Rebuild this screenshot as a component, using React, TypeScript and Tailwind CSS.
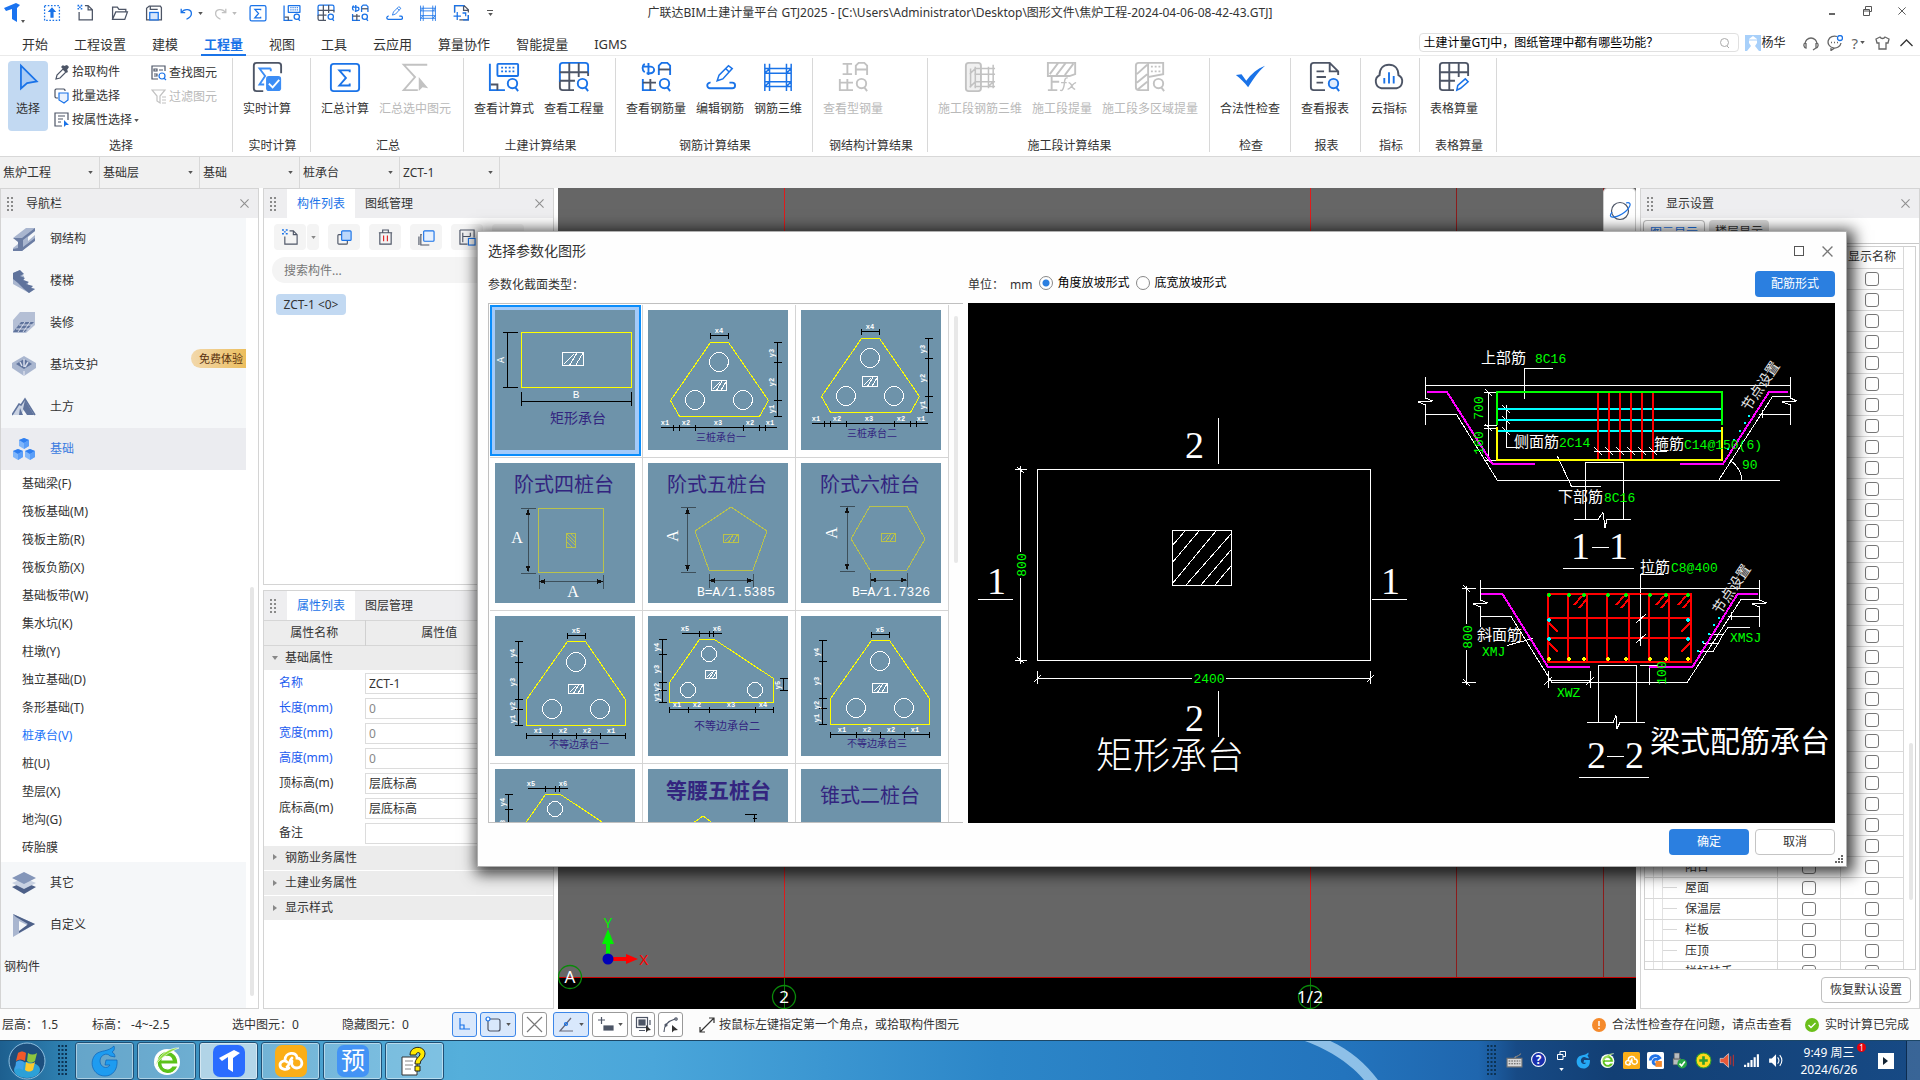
import React from "react";

type Kids = { children?: React.ReactNode };
const BLUE = "#1a73e8";
const DARK = "#4d5566";
const GRAY = "#c2c2c2";

/* ---------- generic pieces ---------- */

const Grip = () => (
  <svg width="8" height="16" viewBox="0 0 8 16" className="shrink-0" fill="#8a8a8a">
    {[0, 4, 8, 12].map((y) => (
      <g key={y}>
        <rect x="0" y={y + 1} width="2" height="2" />
        <rect x="4" y={y + 1} width="2" height="2" />
      </g>
    ))}
  </svg>
);

const Caret = ({ color = "#555" }: { color?: string }) => (
  <svg width="5" height="3" viewBox="0 0 6 4" className="shrink-0">
    <path d="M0 0h6L3 4z" fill={color} />
  </svg>
);

const Cross = ({ size = 9, color = "#8f8f8f" }: { size?: number; color?: string }) => (
  <svg width={size} height={size} viewBox="0 0 10 10" className="shrink-0">
    <path d="M.5.5l9 9M9.5.5l-9 9" stroke={color} strokeWidth="1.2" />
  </svg>
);

const Close = () => (
  <button aria-label="关闭" className="flex size-5 items-center justify-center">
    <Cross />
  </button>
);

/* ---------- toolbar icons, all on a 32 x 32 grid ---------- */

const Lens = ({ c = BLUE }: { c?: string }) => (
  <g stroke={c} fill="none">
    <circle cx="25" cy="23" r="5" />
    <path d="M28 27l3 4" />
  </g>
);

const icons: Record<string, (c: string, d: string) => React.ReactNode> = {
  cursor: (c) => <path d="M8 3v26l7-6 11-2z" fill="#a9cbf5" stroke={c} />,
  realtime: (c, d) => (
    <>
      <path d="M12 31H5a3 3 0 0 1-3-3V4a3 3 0 0 1 3-3h23a3 3 0 0 1 3 3v8" stroke={d} />
      <path d="M20 7H8l6 8-6 9h5M20 7v3" stroke="#3c8df5" />
      <rect x="15" y="15" width="16" height="16" rx="3" fill="#3c8df5" stroke="none" />
      <path d="M18 23l4 4 7-8" stroke="#fff" />
    </>
  ),
  sum: (c) => (
    <>
      <rect x="1" y="2" width="30" height="29" rx="3" stroke={c} />
      <path d="M21 11V9H10l7 8-7 8h11v-2" stroke={c} />
    </>
  ),
  sumSel: (c) => (
    <>
      <path d="M29 3H4l12 13L4 30h15" stroke={c} />
      <path d="M20 16v15l4-4 6 1z" fill={c} stroke="none" />
    </>
  ),
  formula: (c, d) => (
    <>
      <rect x="9" y="2" width="22" height="13" rx="1" stroke={c} />
      <path d="M13 6h15M13 10h15" stroke={c} strokeDasharray="2 2" />
      <path d="M1 2v28h16" stroke={c} />
      <path d="M2 24h7v6" stroke={d} />
      <Lens c={c} />
    </>
  ),
  qty: (c, d) => (
    <>
      <path d="M16 30H4a3 3 0 0 1-3-3V20M31 11v4" stroke={d} />
      <path d="M1 21V4a3 3 0 0 1 3-3h24a3 3 0 0 1 3 3v8" stroke={c} />
      <path d="M11 1v29M21 1v15M1 11h30M1 20h16" stroke={d} />
      <Lens c={c} />
    </>
  ),
  rebarQty: (c, d) => (
    <>
      <path d="M8 1v13M2 5h8a4 3.500 0 1 1 0 7H6M4 2a4 5 0 0 0 0 9" stroke={c} />
      <path d="M19 14V4l3-3h6l3 3v10" stroke={c} />
      <path d="M19 8h12" stroke={d} />
      <path d="M2 18v12h14" stroke={c} />
      <path d="M2 22h14M10 18v12" stroke={d} />
      <Lens c={c} />
    </>
  ),
  rebarEdit: (c) => (
    <>
      <path d="M13 20l2-6L25 4l4 3-10 11-6 2zM22 7l4 4" stroke={c} strokeWidth="1.6" />
      <path d="M6 22a3 3 0 0 0-1 6h24a3 3 0 0 0 0-6h-3" stroke={c} />
    </>
  ),
  rebar3d: (c) => (
    <path
      d="M2 2v29M7 2v29M25 2v29M30 2v29M2 7h28M2 12h28M2 21h28M2 26h28M2 12l5-5M2 26l5-5M25 12l5-5M25 26l5-5"
      stroke={c}
      strokeWidth="1.6"
    />
  ),
  shapeSteel: (c) => (
    <>
      <path d="M5 2h10M5 13h10M10 2v11" stroke={c} />
      <path d="M19 14V4l3-3h6l3 3v10M19 8h12" stroke={c} />
      <path d="M2 18v12h14M2 22h14M10 18v12" stroke={c} />
      <Lens c={c} />
    </>
  ),
  seg3d: (c) => (
    <>
      <rect x="1" y="1" width="16" height="30" rx="3" stroke={c} fill="#f0f0f0" />
      <path d="M10 7h22M10 13h22M10 21h22M10 26h22M6 7v20M11 5v23M25 5v23M30 3v25M5 13l6-6M5 27l6-6M24 27l6-6" stroke={c} strokeWidth="1.6" />
    </>
  ),
  segQty: (c) => (
    <>
      <path d="M1 13V1h29v12l-6 2H1zM3 13L12 1M10 14L20 1M19 14l9-12" stroke={c} />
      <path d="M5 15v15M1 30h10M5 21h8" stroke={c} />
      <path d="M22 17c-4-1-3 5-4 9s-2 5-4 4M15 22h6M23 22c4 0 3 7 7 7M31 22c-4 0-5 7-9 7" stroke={c} strokeWidth="1.5" />
    </>
  ),
  segArea: (c) => (
    <>
      <path d="M14 30H4a3 3 0 0 1-3-3V4a3 3 0 0 1 3-3h26v12l-16 3zM14 1v29M2 13L13 3M2 22l11-9M2 30l11-9" stroke={c} />
      <path d="M17 5h12M17 10h12" stroke={c} strokeDasharray="2 2" />
      <Lens c={c} />
    </>
  ),
  check: (c) => <path d="M1 14l6-1 5 7C17 13 24 7 32 4c-8 7-13 15-18 23C10 22 6 18 1 14z" fill={c} stroke="none" />,
  report: (c, d) => (
    <>
      <path d="M16 30H4a3 3 0 0 1-3-3V4a3 3 0 0 1 3-3h17l9 9v4M21 1v9h9" stroke={d} />
      <path d="M7 10h8M7 16h10M7 22h7" stroke={d} />
      <circle cx="25" cy="23" r="5" fill="#e1edfd" stroke={c} />
      <path d="M28 27l3 4" stroke={c} />
    </>
  ),
  cloud: (c, d) => (
    <>
      <path d="M8 28a7.500 7.500 0 0 1-2-14C6 7 10 3 16 3s10 4 10 11a7.500 7.500 0 0 1-2 14z" stroke={d} />
      <path d="M11 17v6M16 11v12M21 15v8" stroke={c} />
    </>
  ),
  tableCalc: (c, d) => (
    <>
      <path d="M16 30H4a3 3 0 0 1-3-3V4a3 3 0 0 1 3-3h24a3 3 0 0 1 3 3v11" stroke={d} />
      <path d="M11 1v29M21 1v15M1 11h30M1 20h16" stroke={d} />
      <path d="M19 30l1-5 8-7 3 3-8 7z" stroke={c} strokeWidth="1.6" />
    </>
  ),
  upload: (c) => (
    <>
      <rect x="2" y="2" width="28" height="28" stroke={c} strokeDasharray="3 3" />
      <path d="M16 5l8 9h-5v11h-6V14H8z" fill={c} stroke="none" />
    </>
  ),
  newDoc: (c, d) => (
    <>
      <path d="M3 14v15h25V10l-8-8H14M20 2v8h8" stroke={d} />
      <path d="M0 2h3M6 2h3M3 5h3M0 8h3M6 8h3" stroke={c} strokeWidth="3" />
    </>
  ),
  open: (_c, d) => <path d="M2 28V5h9l3 4h13v5M2 28l6-14h22l-5 14z" stroke={d} />,
  save: (c, d) => (
    <>
      <path d="M2 29V7l5-4h21l2 3v23z" stroke={d} />
      <path d="M9 3v6h14" stroke={d} />
      <rect x="8" y="15" width="16" height="14" fill="#d5e5fb" stroke={c} />
    </>
  ),
  undo: (c) => <path d="M4 5v9h9M4 14C12 3 28 6 27 17c0 6-5 9-11 12" stroke={c} />,
  redo: () => <path d="M28 5v9h-9M28 14C20 3 4 6 5 17c0 6 5 9 11 12" stroke={GRAY} />,
  batchNew: (c, d) => (
    <>
      <path d="M2 15V2h18l8 8v5M19 2v9h9M11 29h17V20" stroke={d} />
      <path d="M2 15V2h18M28 20v9H18M7 14v15M0 22h14M17 16h6v6" stroke={c} />
    </>
  ),
};

const Icon = ({ name, size = 32, off = false, w = 2 }: { name: string; size?: number; off?: boolean; w?: number }) => (
  <svg width={size} height={size} viewBox="-1 0 34 32" fill="none" strokeWidth={w} className="shrink-0">
    {icons[name](off ? GRAY : BLUE, off ? GRAY : DARK)}
  </svg>
);

/* ---------- title bar and menu ---------- */

const quick = ["upload", "newDoc", "open", "save"];
const quick2 = ["sum", "formula", "qty", "rebarQty", "rebarEdit", "rebar3d", "batchNew"];

const TitleBar = () => (
  <header className="relative flex h-[26px] shrink-0 items-center bg-white">
    <svg width="22" height="20" viewBox="0 0 22 20" className="ml-1">
      <path d="M0 5L12 0l4 2-3 3 0 14-5-3V6L2 8z" fill="#1a73f0" />
      <path d="M17 17h4l-2 3z" fill="#555" />
    </svg>
    <div className="ml-[17px] flex items-center gap-4">
      {quick.map((n) => (
        <button key={n} aria-label={n} className="w-[18px]">
          <Icon name={n} size={18} w={2.4} />
        </button>
      ))}
      <div className="flex items-center gap-2.5">
        <button aria-label="撤销" className="flex items-center gap-1">
          <Icon name="undo" size={15} w={3} />
          <Caret />
        </button>
        <button aria-label="重做" className="flex items-center gap-1">
          <Icon name="redo" size={15} w={3} />
          <Caret color="#bbb" />
        </button>
      </div>
      <div className="-ml-1 flex items-center gap-4">
        {quick2.map((n) => (
          <button key={n} aria-label={n} className="w-[18px]">
            <Icon name={n} size={18} w={2.4} />
          </button>
        ))}
        <button aria-label="自定义快速访问" className="flex flex-col items-center gap-0.5">
          <span className="h-px w-1.5 bg-[#555]" />
          <Caret />
        </button>
      </div>
    </div>
    <h1 className="absolute inset-x-0 top-1 text-center text-[12px] leading-[18px] text-[#333]">
      广联达BIM土建计量平台 GTJ2025 - [C:\Users\Administrator\Desktop\图形文件\焦炉工程-2024-04-06-08-42-43.GTJ]
    </h1>
    <div className="relative ml-auto mr-3.5 flex items-center gap-[26px] pb-1">
      <button aria-label="最小化" className="h-3 w-2">
        <span className="mt-1.5 block h-0.5 w-1.5 bg-[#666]" />
      </button>
      <button aria-label="还原">
        <svg width="9" height="10" viewBox="0 0 9 10" fill="none" stroke="#555">
          <path d="M2.500 3V.5h6v5H6.500M.5 3.500h6v6h-6zM.5 5h6" />
        </svg>
      </button>
      <button aria-label="关闭窗口">
        <Cross size={8} color="#555" />
      </button>
    </div>
  </header>
);

const menus = ["开始", "工程设置", "建模", "工程量", "视图", "工具", "云应用", "算量协作", "智能提量", "IGMS"];

const MenuBar = () => (
  <nav className="flex h-[30px] shrink-0 items-center border-b border-[#eaeaea] bg-white pl-[9px]">
    {menus.map((m) => {
      const on = m === "工程量";
      return (
        <a key={m} href="#" className={`flex h-[30px] flex-col items-center px-[10px] pt-[9px] text-[13px] leading-[18px] ${on ? "font-bold text-[#1a73e8]" : "text-[#333]"}`}>
          <span className="px-[3px]">{m}</span>
          {on && <span className="mt-px h-0.5 w-full bg-[#1a73e8]" />}
        </a>
      );
    })}
    <div className="ml-auto mr-[7px] flex items-center pt-1">
      <label className="flex h-[19px] w-[320px] items-center rounded-sm border border-[#e0e0e0] bg-white px-[3px]">
        <input aria-label="搜索帮助" className="min-w-0 flex-1 text-[12px] leading-4 text-black outline-none" defaultValue="土建计量GTJ中，图纸管理中都有哪些功能？" />
        <svg width="12" height="12" viewBox="0 0 12 12" fill="none" stroke="#aaa" className="mr-1">
          <circle cx="5.500" cy="5.500" r="4" />
          <path d="M8 9l2 2" />
        </svg>
      </label>
      <svg width="16" height="16" viewBox="0 0 16 16" className="ml-1.5">
        <rect width="16" height="16" fill="#a8d0fa" />
        <path d="M4 4l4-3 4 3v4l-2 3 4 5H2l4-5-2-3z" fill="#fff" />
        <path d="M4 5h8" stroke="#a8d0fa" />
      </svg>
      <span className="text-[12px] leading-4 text-[#222]">杨华</span>
      <div className="ml-[18px] flex items-center gap-2 text-[#666]">
        <button aria-label="客服">
          <svg width="16" height="16" viewBox="0 0 16 16" fill="none" stroke="currentColor" strokeWidth="1.3">
            <path d="M2 9a6 6 0 1 1 12 0M2 8c-2 1-1 5 1 5V8M14 8c2 1 1 5-1 5V8M13 13l-3 2" />
          </svg>
        </button>
        <button aria-label="消息">
          <svg width="16" height="16" viewBox="0 0 16 16" fill="none" stroke="currentColor" strokeWidth="1.3">
            <path d="M10 1.500A6.500 6 0 1 0 14 8M4 13v2.500l3-2" />
            <circle cx="13" cy="3" r="2.500" stroke={BLUE} />
            <path d="M4 7.500h1M7 7.500h1M10 7.500h1" strokeWidth="1.600" />
          </svg>
        </button>
        <button aria-label="帮助" className="flex items-center gap-0.5 text-[15px] leading-4">
          ?<Caret />
        </button>
        <button aria-label="皮肤" className="ml-0.5">
          <svg width="15" height="14" viewBox="0 0 15 14" fill="none" stroke="currentColor" strokeWidth="1.300">
            <path d="M5 1c1 2 4 2 5 0l4 2-1 4h-2v6H4V7H2L1 3z" />
          </svg>
        </button>
        <button aria-label="折叠功能区" className="ml-0.5">
          <svg width="13" height="8" viewBox="0 0 13 8" fill="none" stroke="#333" strokeWidth="1.300">
            <path d="M.5 7l6-6 6 6" />
          </svg>
        </button>
      </div>
    </div>
  </nav>
);

/* ---------- ribbon ---------- */

const groups: { w: string; label: string; items: [string, string, boolean?][] }[] = [
  { w: "w-[78px]", label: "实时计算", items: [["realtime", "实时计算"]] },
  { w: "w-[153px]", label: "汇总", items: [["sum", "汇总计算"], ["sumSel", "汇总选中图元", true]] },
  { w: "w-[152px]", label: "土建计算结果", items: [["formula", "查看计算式"], ["qty", "查看工程量"]] },
  { w: "w-[197px]", label: "钢筋计算结果", items: [["rebarQty", "查看钢筋量"], ["rebarEdit", "编辑钢筋"], ["rebar3d", "钢筋三维"]] },
  { w: "w-[115px]", label: "钢结构计算结果", items: [["shapeSteel", "查看型钢量", true]] },
  { w: "w-[282px]", label: "施工段计算结果", items: [["seg3d", "施工段钢筋三维", true], ["segQty", "施工段提量", true], ["segArea", "施工段多区域提量", true]] },
  { w: "w-[81px]", label: "检查", items: [["check", "合法性检查"]] },
  { w: "w-[70px]", label: "报表", items: [["report", "查看报表"]] },
  { w: "w-[59px]", label: "指标", items: [["cloud", "云指标"]] },
  { w: "w-[77px]", label: "表格算量", items: [["tableCalc", "表格算量"]] },
];

const SmallCmd = ({ label, off, caret, children }: Kids & { label: string; off?: boolean; caret?: boolean }) => (
  <button className={`flex h-[24px] shrink-0 items-center gap-[2px] whitespace-nowrap text-[12px] leading-4 ${off ? "text-[#b9b9b9]" : "text-[#333]"}`}>
    <svg width="16" height="16" viewBox="0 0 16 16" fill="none" strokeWidth="1.200" className="shrink-0">
      {children}
    </svg>
    {label}
    {caret && <Caret />}
  </button>
);

const Ribbon = () => (
  <section className="flex h-[101px] shrink-0 items-start border-b border-[#d8d8d8] bg-white pt-0.5 text-[12px] leading-4 text-[#333]">
    <div className="flex h-[94px] w-[233px] flex-col border-r border-[#d8d8d8] pl-2">
      <div className="flex h-[72px] shrink-0 items-start pt-[3px]">
        <button className="flex h-[70px] w-10 flex-col items-center rounded-sm bg-[#c2d9f2] pt-px">
          <Icon name="cursor" size={30} />
          <span className="mt-[9px]">选择</span>
        </button>
        <div className="ml-[6px] flex h-[70px] flex-col justify-center">
          <SmallCmd label="拾取构件">
            <path d="M2 15l1-4 6-6 3 3-6 6z" stroke={DARK} />
            <path d="M7 3l6 6 1-2-1-1 2-3-2-2-3 1-1-1z" fill={DARK} />
          </SmallCmd>
          <SmallCmd label="批量选择">
            <path d="M4 10H2L1 9V2l1-1h8l1 1v1" stroke={DARK} />
            <path d="M5 5h9v7l-4 3-5-3z" stroke={BLUE} fill="#eaf2fe" />
          </SmallCmd>
          <SmallCmd label="按属性选择" caret>
            <path d="M8 14H1V1h13v7M4 4h7M4 7h5M4 10h3" stroke={DARK} />
            <path d="M10 8v7l2-2h3z" fill={BLUE} />
          </SmallCmd>
        </div>
        <div className="ml-3 flex flex-col">
          <SmallCmd label="查找图元">
            <path d="M7 14H1V1h13v5M3 4h3v2H3zM8 5h4M3 9h3v2H3" stroke={DARK} />
            <path d="M13 13l2 2M11 8a3 3 0 1 1 0 6 3 3 0 1 1 0-6" stroke={BLUE} />
          </SmallCmd>
          <SmallCmd label="过滤图元" off>
            <path d="M1 1h13L9 7v7l-3-2V7zM11 8h4M11 11h4M11 14h4" stroke="#c2c2c2" />
          </SmallCmd>
        </div>
      </div>
      <span className="mt-2 pl-0.5 text-center">选择</span>
    </div>
    {groups.map((g) => (
      <div key={g.label} className={`flex h-[94px] shrink-0 flex-col border-r border-[#d8d8d8] ${g.w}`}>
        <div className="flex h-[72px] shrink-0 gap-2.5 pl-2.5 pt-[3px]">
          {g.items.map(([icon, label, off]) => (
            <button key={label} disabled={!!off} className={`flex h-[69px] flex-col items-center whitespace-nowrap ${off ? "text-[#b9b9b9]" : ""}`}>
              <Icon name={icon} off={!!off} />
              <span className="mt-2">{label}</span>
            </button>
          ))}
        </div>
        <span className="mt-2 whitespace-nowrap pl-0.5 text-center">{g.label}</span>
      </div>
    ))}
  </section>
);

const Combos = () => (
  <div className="flex h-[31px] shrink-0 items-stretch bg-[#f1f1f1]">
    {["焦炉工程", "基础层", "基础", "桩承台", "ZCT-1"].map((v) => (
      <div key={v} className="relative flex w-[100px] items-center border-r border-[#d8d8d8]">
        <select aria-label={v} className="w-full appearance-none pl-[3px] text-[12px] leading-4 text-[#333] outline-none">
          <option>{v}</option>
        </select>
        <span className="pointer-events-none absolute right-1.5">
          <Caret />
        </span>
      </div>
    ))}
  </div>
);

/* ---------- navigation ---------- */

const navArt: Record<string, React.ReactNode> = {
  钢结构: (
    <>
      <path d="M1 11L14 1h9v3l-7 6v4l7-6v4L10 24H1v-3l5-4v-5z" fill="#a9b6cf" />
      <path d="M1 11h9L23 1v3L11 13v7l12-9v3L10 24H1v-2l5-1v-6z" fill="#6b7da3" />
    </>
  ),
  楼梯: (
    <>
      <path d="M1 4l7-3v4l4 2v4l4 2v4l7 3-6 4L1 15z" fill="#a9b6cf" />
      <path d="M8 1l4 4-4 2 5 2-2 2 6 2-3 2 7 2-2 2 4 1-6 4-5-4-6-6-5-4V4z" fill="#5f739c" />
    </>
  ),
  装修: (
    <>
      <path d="M1 9l7-8h15v13l-9 8H1z" fill="#b4bfd5" />
      <path d="M9 11h13l-9 10H1z" fill="#5f739c" />
      <path d="M7 14h13M4 18h13M13 11l-7 10M18 11l-7 10" stroke="#d6dcea" />
    </>
  ),
  基坑支护: (
    <>
      <path d="M0 10L12 3l12 7v5l-12 8-12-8z" fill="#a9b6cf" />
      <path d="M4 11l8-5 8 5-8 5z" fill="#5f739c" />
      <path d="M8 9l2 4M12 6v8M16 9l-3 5M12 18v5" stroke="#d6dcea" strokeWidth="1.500" />
    </>
  ),
  土方: (
    <>
      <path d="M0 20L7 9l2 1 4-6 10 16h-7l-3-7-4 7z" fill="#c9d2e2" />
      <path d="M0 20L7 9l2 1 4-6 10 16" fill="none" stroke="#5f739c" strokeWidth="1.500" />
      <path d="M13 5l9 15h-7l-4-6zM8 13l3 7H7z" fill="#5f739c" />
    </>
  ),
  基础: (
    <>
      {[[12, 1], [6, 12], [18, 12]].map(([x, y]) => (
        <g key={x}>
          <path d={`M${x} ${y}l5 2v6l-5 3-5-3v-6z`} fill="#7fb6fb" />
          <path d={`M${x} ${y}l5 2-5 3-5-3z`} fill="#2f7ff0" />
          <path d={`M${x} ${y + 5}l5-3v6l-5 3z`} fill="#5a9ef8" />
        </g>
      ))}
    </>
  ),
  其它: (
    <>
      <path d="M0 16l12-5 12 5-12 7z" fill="#4d6088" />
      <path d="M0 12l12-5 12 5-12 6z" fill="#c9d2e2" />
      <path d="M0 7l12-6 12 6-12 6z" fill="#8496b9" />
    </>
  ),
  自定义: (
    <>
      <path d="M1 1l22 10L1 24z" fill="#a9b6cf" />
      <path d="M1 1l22 10L7 20v-3l9-6L4 4z" fill="#4d6088" />
      <path d="M7 8l8 4-8 6z" fill="#f5f7f9" />
    </>
  ),
};

const subs = ["基础梁(F)", "筏板基础(M)", "筏板主筋(R)", "筏板负筋(X)", "基础板带(W)", "集水坑(K)", "柱墩(Y)", "独立基础(D)", "条形基础(T)", "桩承台(V)", "桩(U)", "垫层(X)", "地沟(G)", "砖胎膜"];

const NavItem = ({ name, active, badge }: { name: string; active?: boolean; badge?: string }) => (
  <button className={`flex h-[42px] w-full items-center pl-[11px] ${active ? "bg-[#ebecf0] text-[#3a7be0]" : "text-[#333]"}`}>
    <svg width="24" height="24" viewBox="0 0 24 24" className="shrink-0">
      {navArt[name]}
    </svg>
    <span className="ml-3.5">{name}</span>
    {badge && (
      <span className="mb-3.5 ml-auto h-[19px] rounded-l-full bg-linear-to-r from-[#f2d8ab] to-[#ecbe5c] pl-2 pr-[3px] text-[11px] leading-[19px] text-[#5a3210]">{badge}</span>
    )}
  </button>
);

const PanelHead = ({ children }: Kids) => (
  <div className="flex h-[29px] shrink-0 items-center bg-[#eeeef0] pl-1.5 pr-1">{children}</div>
);

const NavPanel = () => (
  <aside className="flex w-[259px] shrink-0 flex-col overflow-hidden border border-[#d4d4d4] bg-white text-[12px] leading-4">
    <PanelHead>
      <Grip />
      <span className="ml-[11px] text-[#333]">导航栏</span>
      <span className="ml-auto">
        <Close />
      </span>
    </PanelHead>
    <div className="flex min-h-0 flex-1">
      <div className="flex min-w-0 flex-1 flex-col bg-[#f5f7f9]">
        {["钢结构", "楼梯", "装修"].map((n) => (
          <NavItem key={n} name={n} />
        ))}
        <NavItem name="基坑支护" badge="免费体验" />
        <NavItem name="土方" />
        <NavItem name="基础" active />
        <ul className="bg-white">
          {subs.map((s) => (
            <li key={s} className="h-7">
              <a href="#" className={`flex h-7 items-center pl-[21px] ${s === "桩承台(V)" ? "text-[#1a73f8]" : "text-[#333]"}`}>{s}</a>
            </li>
          ))}
        </ul>
        <NavItem name="其它" />
        <NavItem name="自定义" />
        <button className="flex h-[42px] items-center pl-[3px] text-[#333]">钢构件</button>
      </div>
      <div className="flex w-3 flex-col items-center pt-[369px]">
        <div className="mb-3 w-1 flex-1 rounded bg-[#e6e6e6]" />
      </div>
    </div>
  </aside>
);

/* ---------- component list and properties ---------- */

const TabHead = ({ on, other }: { on: string; other: string }) => (
  <PanelHead>
    <Grip />
    <button className="ml-[9px] h-full bg-white px-2.5 text-[#1a73e8]">{on}</button>
    <button className="px-2.5 text-[#333]">{other}</button>
    <span className="ml-auto">
      <Close />
    </span>
  </PanelHead>
);

const ToolBtn = ({ label, children }: Kids & { label: string }) => (
  <button aria-label={label} className="flex h-[26px] w-8 shrink-0 items-center justify-center rounded-sm bg-[#f4f4f4]">
    <svg width="17" height="17" viewBox="0 0 18 18" fill="none" stroke={DARK} strokeWidth="1.200">
      {children}
    </svg>
  </button>
);

const ListPanel = () => (
  <section className="flex h-[397px] shrink-0 flex-col overflow-hidden border border-[#d4d4d4] bg-white">
    <TabHead on="构件列表" other="图纸管理" />
    <div className="flex gap-[9px] pl-2.5 pt-[6px]">
      <div className="flex gap-px">
        <ToolBtn label="新建">
          <path d="M3 8v8h13V6l-4-4H8M12 2v4h4" />
          <path d="M0 1h2M4 1h2M2 3h2M0 5h2M4 5h2" stroke={BLUE} strokeWidth="1.500" />
        </ToolBtn>
        <button aria-label="新建选项" className="flex w-3 items-center justify-center rounded-sm bg-[#f4f4f4]">
          <Caret color="#888" />
        </button>
      </div>
      <ToolBtn label="复制">
        <rect x="2" y="6" width="10" height="10" rx="1" />
        <rect x="6" y="2" width="10" height="10" rx="1" fill="#bcd7fb" stroke={BLUE} />
      </ToolBtn>
      <ToolBtn label="删除">
        <path d="M2 4h14M6 4V1h6v3M3 4v12h12V4" />
        <path d="M7 7v6M11 7v6" stroke="#e02020" />
      </ToolBtn>
      <ToolBtn label="层间复制">
        <path d="M4 6H3v11h9M1 8v9" />
        <rect x="6" y="2" width="11" height="11" rx="1" fill="#e6f0fe" stroke={BLUE} />
      </ToolBtn>
      <ToolBtn label="存档">
        <path d="M1 1h15v8M1 1v15h8M4 4v10M4 8h8M12 4v4" />
        <rect x="10" y="10" width="7" height="7" stroke={BLUE} />
      </ToolBtn>
      <ToolBtn label="更多">
        <path d="M4 9h10" />
      </ToolBtn>
    </div>
    <input aria-label="搜索构件" placeholder="搜索构件..." className="ml-2 mr-2 mt-[7px] h-[26px] rounded-full bg-[#f4f4f4] px-3 text-[12px] outline-none placeholder:text-[#777]" />
    <button className="ml-3 mt-[11px] h-[21px] w-[70px] rounded-sm bg-[#c2d9f2] text-[12px] leading-4 text-[#333]">ZCT-1 &lt;0&gt;</button>
  </section>
);

const props: [string, string, string, string][] = [
  ["名称", "ZCT-1", "text-[#1c5cf0]", "text-[#333]"],
  ["长度(mm)", "0", "text-[#1c5cf0]", "text-[#888]"],
  ["宽度(mm)", "0", "text-[#1c5cf0]", "text-[#888]"],
  ["高度(mm)", "0", "text-[#1c5cf0]", "text-[#888]"],
  ["顶标高(m)", "层底标高", "text-[#333]", "text-[#333]"],
  ["底标高(m)", "层底标高", "text-[#333]", "text-[#333]"],
  ["备注", "", "text-[#333]", "text-[#333]"],
];

const SectionRow = ({ label, open }: { label: string; open?: boolean }) => (
  <tr className="h-[25px]">
    <td colSpan={2} className="border-b border-white bg-[#ececec] p-0">
      <button className="flex h-6 items-center text-[#333]">
        <svg width="7" height="7" viewBox="0 0 7 7" className="ml-2" fill="#888">
          <path d={open ? "M0 1h6L3 5z" : "M1 0l4 3-4 3z"} />
        </svg>
        <span className="ml-[6px]">{label}</span>
      </button>
    </td>
  </tr>
);

const PropPanel = () => (
  <section className="mt-[5px] flex min-h-0 flex-1 flex-col overflow-hidden border border-[#d4d4d4] bg-white">
    <TabHead on="属性列表" other="图层管理" />
    <table className="w-full table-fixed border-collapse">
      <thead>
        <tr className="h-[25px] border-b border-t border-[#d6d6d6] bg-[#ededed] text-[#333]">
          <th className="w-[101px] border-r border-[#d0d0d0] p-0 font-normal">属性名称</th>
          <th className="p-0 pr-10 font-normal">属性值</th>
        </tr>
      </thead>
      <tbody>
        <SectionRow label="基础属性" open />
        {props.map(([k, v, kc, vc]) => (
          <tr key={k} className="h-[25px]">
            <td className={`p-0 pl-[15px] ${kc}`}>
              <label htmlFor={k}>{k}</label>
            </td>
            <td className="p-0">
              <input id={k} defaultValue={v} className={`block h-[21px] w-full border border-[#dcdcdc] px-[3px] text-[12px] outline-none ${vc}`} />
            </td>
          </tr>
        ))}
        <SectionRow label="钢筋业务属性" />
        <SectionRow label="土建业务属性" />
        <SectionRow label="显示样式" />
      </tbody>
    </table>
  </section>
);

/* ---------- model view ---------- */

const ModelView = () => (
  <div className="relative ml-1 min-w-0 flex-1 overflow-hidden bg-[#666]">
    <svg className="block h-full w-full" viewBox="558 188 1078 821" preserveAspectRatio="xMinYMax slice">
      <rect x="558" y="977" width="1078" height="32" fill="#000" />
      <g shapeRendering="crispEdges">
        <path d="M784.500 188v789M1310.500 188v789" stroke="#e01b1b" />
        <path d="M1456.500 188v789M1603.500 188v789" stroke="#8c1c1c" />
        <path d="M558 977.500h1078" stroke="#c80000" />
        <path d="M784.500 978v30M1310.500 978v30" stroke="#0a7a0a" />
      </g>
      {[["A", 570, 977], ["2", 784, 997], ["1/2", 1310, 997]].map(([t, x, y]) => (
        <g key={t}>
          <circle cx={x} cy={y} r="11.500" fill="none" stroke="#0a8a0a" strokeWidth="1.300" />
          <text x={x} y={Number(y) + 6} textAnchor="middle" fontSize="17" fill="#fff">{t}</text>
        </g>
      ))}
      <path d="M606 958v-14h-4l6-15 6 15h-4v14z" fill="#00f000" />
      <path d="M608 957h18v-3l12 5-12 5v-3h-18z" fill="#f00" />
      <circle cx="608" cy="959" r="5.500" fill="#0000b8" />
      <text x="608" y="928" textAnchor="middle" fontSize="15" fill="#00f000">Y</text>
      <text x="644" y="965" textAnchor="middle" fontSize="15" fill="#f00">X</text>
    </svg>
    <div className="absolute right-0 top-0 flex h-16 w-[33px] flex-col items-center gap-[17px] rounded border border-[#ccc] bg-white pt-3">
      <button aria-label="动态观察">
        <svg width="22" height="20" viewBox="0 0 22 20" fill="none" strokeWidth="1.200">
          <circle cx="11" cy="10" r="8.500" stroke={DARK} />
          <path d="M17 2c8-2 3 7-4 11S-2 18 3 11" stroke={BLUE} />
        </svg>
      </button>
      <span className="h-2 w-4 bg-[#445]" />
    </div>
  </div>
);

/* ---------- display settings ---------- */

const lastRows = ["阳台", "屋面", "保温层", "栏板", "压顶", "栏杆扶手"];
const rows = Array.from({ length: 34 }, (_, i) => (i < 28 ? "" : lastRows[i - 28]));

const Tick = ({ label }: { label: string }) => (
  <input type="checkbox" aria-label={label} className="mx-auto block size-3.5 appearance-none rounded-[3px] border border-[#777] bg-white" />
);

const DisplayPanel = () => (
  <aside className="ml-1 flex w-[280px] shrink-0 flex-col overflow-hidden border border-[#d4d4d4] bg-white text-[#333]">
    <PanelHead>
      <Grip />
      <span className="ml-[11px]">显示设置</span>
      <span className="ml-auto">
        <Close />
      </span>
    </PanelHead>
    <div className="flex h-[26px] shrink-0 items-start gap-1 border-b border-[#c8c8c8] px-0.5 pt-0.5">
      <button className="h-6 w-[62px] rounded-t border border-b-0 border-[#bbb] text-[#1a73e8]">图元显示</button>
      <button className="h-6 w-[60px] rounded-t bg-[#d6d6d6]">楼层显示</button>
    </div>
    <div className="mx-[3px] mt-[2px] flex min-h-0 flex-1 items-start overflow-hidden border border-[#d0d0d0]">
      <table className="w-[259px] shrink-0 table-fixed border-collapse">
        <thead>
          <tr className="h-[21px]">
            <th className="border-b border-r border-[#d8d8d8] p-0 font-normal">图层构件</th>
            <th className="w-[63px] border-b border-r border-[#d8d8d8] p-0 font-normal">显示图元</th>
            <th className="w-[63px] border-b border-r border-[#d8d8d8] p-0 font-normal">显示名称</th>
          </tr>
        </thead>
        <tbody>
          {rows.map((r, i) => (
            <tr key={i} className="h-[21px]">
              <td className="border-b border-r border-[#d8d8d8] p-0">
                <div className="flex h-5 items-center">
                  <span className="ml-2 h-full w-2.5 border-x border-[#e2e2e2]" />
                  <span className="h-px w-3.5 bg-[#d8d8d8]" />
                  <span className="ml-2">{r}</span>
                </div>
              </td>
              <td className="border-b border-r border-[#d8d8d8] p-0">
                <Tick label={`${r}显示图元${i + 1}`} />
              </td>
              <td className="border-b border-r border-[#d8d8d8] p-0">
                <Tick label={`${r}显示名称${i + 1}`} />
              </td>
            </tr>
          ))}
        </tbody>
      </table>
      <div className="ml-[5px] mt-[496px] h-[157px] w-1 shrink-0 rounded bg-[#e6e6e6]" />
    </div>
    <button className="mb-[5px] ml-auto mr-2 mt-[7px] h-[26px] w-[90px] shrink-0 rounded-sm border border-[#c0c0c0] bg-white">恢复默认设置</button>
  </aside>
);

/* ---------- thumbnails, each on a 140 x 140 grid ---------- */

const Y = "#ffff00";
const INK = "#33257f";
const OLIVE = "#b9c24c";

const Hatch = ({ x, y, w, h, c = "#fff" }: { x: number; y: number; w: number; h: number; c?: string }) => (
  <path
    d={
      `M${x} ${y}h${w}v${h}h-${w}z` +
      (h > w
        ? `M${x} ${y}l${w} ${w}M${x} ${y + 3}l${w} ${w}M${x} ${y + h - 6}l6 6M${x + 4} ${y}l${w - 4} ${w - 4}`
        : `M${x + 1} ${y + h - 1}l${h - 3}-${h - 3}M${x + w / 3} ${y + h}l${h * 0.6}-${h}M${x + w * 0.62} ${y + h}l${h * 0.6}-${h}`)
    }
    stroke={c}
    fill="none"
  />
);

const Tiny = ({ x, y, t, r }: { x: number; y: number; t: string; r?: boolean }) => (
  <text x={x} y={y} textAnchor="middle" fontSize="7" fill="#fff" fontWeight="bold" className="font-['Liberation_Mono',monospace]" transform={r ? `rotate(-90 ${x} ${y})` : undefined}>{t}</text>
);

const Caption = ({ x, y, s, t, bold }: { x: number; y: number; s: number; t: string; bold?: boolean }) => (
  <text x={x} y={y} fontSize={s} fill={INK} fontWeight={bold ? 700 : 400}>{t}</text>
);

const HDim = ({ y, xs, from, to, names = [] }: { y: number; xs: number[]; from: number; to: number; names?: [number, string][] }) => (
  <>
    <path d={`M${from} ${y}H${to}` + xs.map((x) => `M${x} ${y - 3}v6`).join("")} stroke="#000" />
    {names.map(([x, t]) => (
      <Tiny key={x} x={x} y={y - 3} t={t} />
    ))}
  </>
);

const VDim = ({ x, ys, names = [] }: { x: number; ys: number[]; names?: [number, string][] }) => (
  <>
    <path d={`M${x} ${ys[0]}V${ys[ys.length - 1]}` + ys.map((y) => `M${x - 4} ${y}h8`).join("")} stroke="#000" />
    {names.map(([y, t]) => (
      <Tiny key={y} x={x - 4} y={y} t={t} r />
    ))}
  </>
);

const Piles = ({ at, r = 9.5 }: { at: [number, number][]; r?: number }) => (
  <>
    {at.map(([x, y]) => (
      <circle key={`${x}-${y}`} cx={x} cy={y} r={r} stroke="#fff" fill="none" />
    ))}
  </>
);

const Tri = ({ dx = 0, dy = 0, t }: { dx?: number; dy?: number; t: string }) => (
  <g transform={`translate(${dx} ${dy})`}>
    <path d="M62.500 32.500h18l40 58-9 16h-80l-9-16z" stroke={Y} fill="none" />
    <Piles at={[[71, 52], [47, 90], [95, 90]]} />
    <Hatch x={63.5} y={70.5} w={15} h={10} />
    <HDim y={25.5} xs={[62.5, 80.5]} from={62} to={81} names={[[71, "x4"]]} />
    <VDim x={129.5} ys={[32.5, 52.5, 90.5, 106.5]} names={[[43, "y3"], [72, "y2"], [99, "y1"]]} />
    <HDim y={117.5} xs={[25.5, 31.5, 47.5, 95.5, 111.5, 117.5]} from={13} to={129} names={[[17, "x1"], [38, "x2"], [70, "x3"], [102, "x2"], [122, "x1"]]} />
    <Caption x={48} y={131} s={10} t={t} />
  </g>
);

const Uneven = ({ dx = 0, dy = 0, lx, t }: { dx?: number; dy?: number; lx: number; t: string }) => (
  <g transform={`translate(${dx} ${dy})`}>
    <path d="M72.500 25.500h18l40 58v26h-99v-26z" stroke={Y} fill="none" />
    <Piles at={[[81, 46], [57, 93], [105, 93]]} />
    <Hatch x={73.5} y={68.5} w={15} h={9} />
    <HDim y={19.5} xs={[72.5, 90.5]} from={72} to={91} names={[[81, "x5"]]} />
    <VDim x={23.5} ys={[25.5, 46.5, 83.5, 93.5, 109.5]} names={[[37, "y4"], [66, "y3"], [90, "y2"], [103, "y1"]]} />
    <HDim y={119.5} xs={[31.5, 57.5, 81.5, 105.5, 130.5]} from={31} to={131} names={[[43, "x1"], [68, "x2"], [92, "x2"], [116, "x1"]]} />
    <Caption x={lx} y={132} s={10} t={t} />
  </g>
);

const Skew = ({ dx = 0, dy = 0, t }: { dx?: number; dy?: number; t: string }) => (
  <g transform={`translate(${dx} ${dy})`}>
    <path d="M51.500 23.500h15l59 39v24h-104v-20z" stroke={Y} fill="none" />
    <Piles r={7.5} at={[[61, 38], [40, 74], [107, 74]]} />
    <Hatch x={57.5} y={54.5} w={11} h={8} />
    <HDim y={17.5} xs={[51.5, 61.5, 65.5]} from={34} to={74} names={[[37, "x5"], [69, "x6"]]} />
    <VDim x={14.5} ys={[23.5, 38.5, 66.5, 74.5, 86.5]} names={[[31, "y4"], [53, "y3"], [71, "y2"], [81, "y1"]]} />
    <VDim x={135.5} ys={[62.5, 74.5]} names={[[69, "y5"]]} />
    <HDim y={93.5} xs={[21.5, 40.5, 61.5, 107.5, 125.5]} from={21} to={126} names={[[29, "x1"], [49, "x2"], [83, "x3"], [115, "x4"]]} />
    <Caption x={46} y={114} s={11} t={t} />
  </g>
);

const Arrows = ({ vx, vy, hy, hx }: { vx: number; vy: [number, number]; hy: number; hx: [number, number] }) => (
  <>
    <path d={`M${vx} ${vy[0]}V${vy[1]}M${vx - 7} ${vy[0] - 1}h15M${vx - 7} ${vy[1] + 1}h15M${hx[0]} ${hy}H${hx[1]}M${hx[0]} ${hy - 7}v14M${hx[1]} ${hy - 7}v14`} stroke="#3d4f5a" />
    <path
      d={`M${vx} ${vy[0]}l2.500 6h-5zM${vx} ${vy[1]}l2.500-6h-5zM${hx[0]} ${hy}l6-2.500v5zM${hx[1]} ${hy}l-6-2.500v5z`}
      fill="#111"
    />
  </>
);

const Big = ({ x, y, r }: { x: number; y: number; r?: boolean }) => (
  <text x={x} y={y} textAnchor="middle" fontSize="16" fill="#fff" className="font-['Liberation_Serif',serif]" transform={r ? `rotate(-90 ${x} ${y})` : undefined}>A</text>
);

const Mono = ({ x, y, t }: { x: number; y: number; t: string }) => (
  <text x={x} y={y} fontSize="13" fill="#fff" className="font-['Liberation_Mono',monospace]">{t}</text>
);

const thumbs: [string, React.ReactNode][] = [
  ["矩形承台", (
    <>
      <rect x="26.500" y="22.500" width="110" height="55" stroke={Y} fill="none" />
      <Hatch x={67.5} y={42.5} w={21} h={13} />
      <path d="M12.500 22v55M8 22.500h15M8 77.500h15M26 91.500h111M26.500 82v14M136.500 82v14" stroke="#000" />
      <text x="9" y="50" fontSize="10" fill="#fff" textAnchor="middle" transform="rotate(-90 9 50)" className="font-['Liberation_Mono',monospace]">A</text>
      <text x="81" y="88" fontSize="11" fill="#fff" textAnchor="middle" className="font-['Liberation_Mono',monospace]">B</text>
      <Caption x={55} y={113} s={14} t="矩形承台" />
    </>
  )],
  ["三桩承台一", <Tri t="三桩承台一" />],
  ["三桩承台二", <Tri dx={-2} dy={-4} t="三桩承台二" />],
  ["阶式四桩台", (
    <>
      <Caption x={19} y={29} s={20} t="阶式四桩台" />
      <rect x="43.500" y="45.500" width="65" height="64" stroke={OLIVE} fill="none" />
      <Hatch x={71.5} y={70.5} w={9} h={14} c={OLIVE} />
      <Arrows vx={33} vy={[46, 109]} hy={118.5} hx={[44, 108]} />
      <Big x={22} y={80} />
      <Big x={78} y={134} />
    </>
  )],
  ["阶式五桩台", (
    <>
      <Caption x={19} y={29} s={20} t="阶式五桩台" />
      <path d="M83 44l36 24-14 39H61L47 68z" stroke={OLIVE} fill="none" />
      <Hatch x={75.5} y={71.5} w={15} h={8} c={OLIVE} />
      <Arrows vx={39.5} vy={[45, 108]} hy={117.5} hx={[61, 105]} />
      <Big x={30} y={73} r />
      <Mono x={49} y={133} t="B=A/1.5385" />
    </>
  )],
  ["阶式六桩台", (
    <>
      <Caption x={19} y={29} s={20} t="阶式六桩台" />
      <path d="M69 43h37l18 33-18 31H69L50 76z" stroke={OLIVE} fill="none" />
      <Hatch x={80.5} y={70.5} w={14} h={8} c={OLIVE} />
      <Arrows vx={46} vy={[44, 107]} hy={117} hx={[69, 106]} />
      <Big x={36} y={70} r />
      <Mono x={51} y={133} t="B=A/1.7326" />
    </>
  )],
  ["不等边承台一", <Uneven lx={54} t="不等边承台一" />],
  ["不等边承台二", <Skew t="不等边承台二" />],
  ["不等边承台三", <Uneven dx={-2} dy={-1} lx={48} t="不等边承台三" />],
  ["不等边承台四", <Skew dx={-1} dy={2} t="不等边承台四" />],
  ["等腰五桩台", (
    <>
      <Caption x={18} y={29} s={21} t="等腰五桩台" bold />
      <path d="M30 65l25-18 25 18" stroke={Y} fill="none" />
      <path d="M97 45.500h12M106.500 45v20M105 49h4" stroke="#000" />
    </>
  )],
  ["锥式二桩台", <Caption x={19} y={34} s={20} t="锥式二桩台" />],
];

const ThumbList = () => (
  <div className="flex min-h-0 w-[475px] flex-1 overflow-hidden border border-r-0 border-[#c0c0c0]">
    <div className="grid h-max shrink-0 grid-cols-3 pl-px pt-px">
      {thumbs.map(([name, art], i) => (
        <button
          key={name}
          aria-label={name}
          className="flex size-[153px] items-start border-b border-r border-[#d4d4d4] bg-white"
        >
          <span className={`block size-[151px] ${i === 0 ? "border-2 border-[#0a8dfb] bg-[#a3cbfb] p-[3px]" : "p-[5px]"}`}>
            <svg width="140" height="140" viewBox="0 0 140 140" className="block bg-[#6e93aa]" shapeRendering="crispEdges">
              {art}
            </svg>
          </span>
        </button>
      ))}
    </div>
    <div className="ml-[5px] mt-3 h-[247px] w-1 rounded bg-[#e8e8e8]" />
  </div>
);

/* ---------- section drawing ---------- */

const G = ({ x, y, t }: { x: number; y: number; t: string }) => (
  <text x={x} y={y} fontSize="13" fill="#00ff00" className="font-['Liberation_Mono',monospace]">{t}</text>
);
const GV = ({ x, y, t }: { x: number; y: number; t: string }) => (
  <text x={x} y={y} fontSize="13" fill="#00ff00" textAnchor="middle" className="font-['Liberation_Mono',monospace]" transform={`rotate(-90 ${x} ${y})`}>{t}</text>
);
const W = ({ x, y, t }: { x: number; y: number; t: string }) => (
  <text x={x} y={y} fontSize="15" fill="#fff" className="font-['Noto_Sans_CJK_SC',sans-serif]">{t}</text>
);
const S = ({ x, y, t }: { x: number; y: number; t: string }) => (
  <text x={x} y={y} fontSize="38" fill="#fff" className="font-['Liberation_Serif',serif]">{t}</text>
);
const Slanted = ({ x, y }: { x: number; y: number }) => (
  <text x={x} y={y} fontSize="14" fill="#e8e8e8" transform={`rotate(-56 ${x} ${y})`}>节点设置</text>
);
const dots = (pts: [number, number][], c: string, r = 2) =>
  pts.map(([x, y]) => <path key={`${x}-${y}`} d={`M${x - r} ${y}l${r}-${r} ${r} ${r}-${r} ${r}z`} fill={c} stroke={c} />);

const barX = [1549, 1569, 1584, 1608, 1626, 1650, 1666, 1688];

const Drawing = () => (
  <svg viewBox="968 303 867 520" preserveAspectRatio="xMidYMid meet" className="block h-full min-h-0 w-full bg-black" fill="none">
    <g shapeRendering="crispEdges" stroke="#fff">
      {/* plan */}
      <rect x="1037.500" y="469.500" width="333" height="191" />
      <rect x="1172.500" y="530.500" width="59" height="55" />
      <path d="M1172 546l13-15M1172 563l27-32M1172 584l44-53M1186 585l45-51M1201 585l30-35M1215 585l16-19" />
      <path d="M1020.500 466v86M1020.500 578v86M1015 469.500h12M1015 660.500h12M1017 467l7 6M1017 657l7 6" />
      <path d="M1037 678.500h155M1226 678.500h145M1037.500 671v13M1370.500 671v13M1034 682l7-7M1367 682l7-7" />
      <path d="M978 599.500h35M1372 599.500h35M1218.500 418v46M1218.500 691v46" />
      {/* section 1-1 */}
      <path d="M1425.500 385.500h365M1524.500 399v-30.500h28" />
      <path d="M1425.500 377v21l7 3-14 1 7 3v20M1790.500 377v21l6 3-14 1 8 3v20" />
      <path d="M1425.500 414.500h31l41 66h282M1718.500 480.500l54-84h18M1759 414.500h31M1762.500 410v8" />
      <path d="M1488.500 392v68M1484 392.500h13M1484 425.500h13M1484 428.500h13M1484 460.500h13M1485 389l7 7M1485 424l7 7M1485 457l7 7" />
      <path d="M1506.500 405v42.500h12M1502 405l8 8M1502 416l8 8M1502 427l8 8" />
      <path d="M1557.500 456.500l14 30h29" />
      <path d="M1585.500 519.500v-57h38v57M1574 519.500h24l5-7 2 15 2-8h24" />
      <path d="M1730 460q11 8 12 20M1563 568.500h71" />
      {/* section 2-2 */}
      <path d="M1480.500 588.500h279M1640.500 646v-71.500h23M1636 623l10-9M1636 643l10-9" />
      <path d="M1480.500 580v20l7 3-14 1 7 3v20M1759.500 580v20l7 3-14 1 7 3v20" />
      <path d="M1480.500 616.500h30.500l41 66h135l54-83h18M1728 616.500h31M1731.500 612v8" />
      <path d="M1466.500 586v38M1466.500 650v35M1462 588.500h14M1462 682.500h14M1463 585l7 7M1463 679l7 7" />
      <path d="M1507 645.500l26-7M1548 680.500h42M1548.500 671v17M1590.500 671v17M1544 685l8-8M1586 685l8-8" />
      <path d="M1598.500 722.500v-57h38v57M1587 722.500h26l3-7 1 13 3-6h25" />
      <path d="M1640 665.500h18M1649.500 665.500v19M1579 777.500h70" />
      <path d="M1750 627.500h-22l-5 7h-14M1723 634.500l-5 9h-15M1718 643.500l-5 8h-15" />
    </g>
    <g shapeRendering="crispEdges" strokeWidth="2">
      <path d="M1427 392h20l45.500 72H1535M1680 464h43l46-72h19" stroke="#ff00ff" />
      <path d="M1498 409h224M1498 420h224M1498 431h224" stroke="#00ffff" />
      <path d="M1598 392v68M1609 392v68M1620 392v68M1631 392v68M1642 392v68M1653 392v68" stroke="#ff0000" />
      <path d="M1497 425v-33h225v33" stroke="#00ff00" />
      <path d="M1497 427v33h225v-33" stroke="#ffff00" />
      <path d="M1481 594h21.500l45.500 73h42M1649 667h43.500l45-73h20" stroke="#ff00ff" />
      <path d="M1548 594h143v68h-143zM1548 618h143M1548 638h143M1568 594v68M1587 594v68M1607 594v68M1629 594v68M1649 594v68M1669 594v68" stroke="#ff0000" />
      <path d="M1582 596l-8 9M1587 599l-8 9M1624 596l-8 9M1629 599l-8 9M1664 596l-8 9M1669 599l-8 9M1686 596l-8 9M1691 599l-8 9M1549 623l9 9M1549 643l9 9M1690 623l-9 9M1690 643l-9 9" stroke="#ff0000" />
    </g>
    <path d="M1594 451.500h73M1594 447l8 8M1605 447l8 8M1616 447l8 8M1627 447l8 8M1638 447l8 8M1649 447l8 8" stroke="#fff" shapeRendering="crispEdges" />
    <path d="M1640.500 594v52M1636 623l10-9M1636 643l10-9" stroke="#fff" shapeRendering="crispEdges" />
    {dots(barX.map((x) => [x, 595]), "#00ff00")}
    {dots(barX.map((x) => [x, 659]), "#ffff00")}
    {dots([[1549, 620], [1688, 620], [1549, 639], [1688, 639]], "#00ffff")}
    {dots([[1728, 449], [1734, 440], [1740, 431], [1745, 423], [1749, 416], [1698, 651], [1703, 642], [1709, 634], [1714, 625], [1719, 618]], "#00ffff", 1)}

    <S x={987} y={594} t="1" />
    <S x={1381} y={594} t="1" />
    <S x={1185} y={458} t="2" />
    <S x={1185} y={731} t="2" />
    <text x="1096" y="769" fontSize="37" fill="#fff" className="font-['Noto_Sans_CJK_SC',sans-serif] font-light">矩形承台</text>
    <GV x={1026} y={565} t="800" />
    <text x="1209" y="683" fontSize="13" fill="#00ff00" textAnchor="middle" className="font-['Liberation_Mono',monospace]">2400</text>

    <W x={1481} y={363} t="上部筋" />
    <G x={1535} y={363} t="8C16" />
    <GV x={1483} y={408} t="700" />
    <GV x={1483} y={443} t="160" />
    <W x={1514} y={447} t="侧面筋" />
    <G x={1559} y={447} t="2C14" />
    <W x={1654} y={449} t="箍筋" />
    <G x={1684} y={449} t="C14@150(6)" />
    <G x={1742} y={469} t="90" />
    <W x={1558} y={502} t="下部筋" />
    <G x={1604} y={502} t="8C16" />
    <Slanted x={1749} y={412} />
    <S x={1571} y={559} t="1" />
    <S x={1609} y={559} t="1" />
    <path d="M1592 547.500h17M1607 756.500h17" stroke="#fff" shapeRendering="crispEdges" />

    <W x={1640} y={572} t="拉筋" />
    <G x={1671} y={572} t="C8@400" />
    <GV x={1472} y={637} t="800" />
    <W x={1477} y={640} t="斜面筋" />
    <G x={1482} y={656} t="XMJ" />
    <G x={1557} y={697} t="XWZ" />
    <GV x={1666} y={673} t="100" />
    <G x={1730} y={642} t="XMSJ" />
    <Slanted x={1720} y={615} />
    <S x={1587} y={768} t="2" />
    <S x={1625} y={768} t="2" />
    <text x="1650" y="752" fontSize="30" fill="#fff">梁式配筋承台</text>
  </svg>
);

/* ---------- dialog ---------- */

const Radio = ({ id, label, on }: { id: string; label: string; on?: boolean }) => (
  <label htmlFor={id} className="flex items-center gap-1 text-black">
    <input id={id} name="slope" type="radio" defaultChecked={on} className="size-3.5 appearance-none rounded-full border border-[#888] bg-white checked:bg-[radial-gradient(circle,#2b7fe0_3px,#ffffff_4px)]" />
    {label}
  </label>
);

const Dialog = () => (
  <div role="dialog" aria-label="选择参数化图形" className="absolute bottom-[213px] left-[477px] right-[73px] top-[231px] flex flex-col border border-[#b0b0b0] bg-[#fefefe] text-[12px] leading-4 text-[#333] shadow-[3px_3px_14px_4px_rgba(0,0,0,0.75)]">
    <div className="flex h-[38px] shrink-0 items-center pl-2.5 pr-[13px]">
      <h2 className="text-[14px] leading-5">选择参数化图形</h2>
      <button aria-label="最大化" className="ml-auto size-2.5 border border-[#555]" />
      <button aria-label="关闭对话框" className="ml-[18px]">
        <Cross size={11} color="#777" />
      </button>
    </div>
    <div className="flex min-h-0 flex-1 pl-2.5 pr-[11px]">
      <div className="flex w-[480px] shrink-0 flex-col">
        <div className="flex h-[33px] shrink-0 items-center pb-1">参数化截面类型：</div>
        <ThumbList />
      </div>
      <div className="flex min-w-0 flex-1 flex-col">
        <div className="flex h-[33px] shrink-0 items-start">
          <span className="pt-[7px]">单位：</span>
          <span className="ml-1.5 pt-[7px]">mm</span>
          <div className="ml-[7px] flex gap-[7px] pt-[5px]">
            <Radio id="slope-angle" label="角度放坡形式" on />
            <Radio id="slope-width" label="底宽放坡形式" />
          </div>
          <button className="ml-auto mt-px h-[26px] w-20 rounded-sm bg-[#2b7fe0] text-white">配筋形式</button>
        </div>
        <div className="min-h-0 flex-1">
          <Drawing />
        </div>
      </div>
    </div>
    <div className="relative flex h-[43px] shrink-0 justify-end gap-1.5 pr-[11px] pt-1.5">
      <button className="h-[26px] w-20 rounded-sm bg-[#2b7fe0] text-white">确定</button>
      <button className="h-[26px] w-20 rounded-sm border border-[#c4c4c4] bg-white">取消</button>
      <svg width="8" height="8" viewBox="0 0 8 8" fill="#666" className="absolute bottom-[3px] right-[3px]">
        <path d="M0 6h2v2H0zM3 6h2v2H3zM6 6h2v2H6zM3 3h2v2H3zM6 3h2v2H6zM6 0h2v2H6z" />
      </svg>
    </div>
  </div>
);

/* ---------- status bar ---------- */

const Snap = ({ label, w, on, caret, children }: Kids & { label: string; w: string; on?: boolean; caret?: boolean }) => (
  <button aria-label={label} className={`flex h-[25px] shrink-0 items-center justify-center gap-1 rounded-[3px] border ${w} ${on ? "border-[#3c86e8] bg-[#d9e8fc]" : "border-[#999] bg-white"}`}>
    <svg width="17" height="17" viewBox="0 0 17 17" fill="none" stroke={DARK} strokeWidth="1.200" className="shrink-0">
      {children}
    </svg>
    {caret && <Caret />}
  </button>
);

const StatusBar = () => (
  <footer className="flex h-[31px] shrink-0 items-center bg-[#fcfcfc] text-[12px] leading-4 text-[#333]">
    <div className="flex w-[452px] shrink-0 pl-0.5">
      <span className="w-[90px]">层高： 1.5</span>
      <span className="w-[140px]">标高： -4~-2.5</span>
      <span className="w-[110px]">选中图元：0</span>
      <span>隐藏图元：0</span>
    </div>
    <div className="flex gap-[3px]">
      <Snap label="正交" w="w-[25px]" on>
        <path d="M4 2v11h10M4 9h4v4" stroke={BLUE} />
      </Snap>
      <Snap label="矩形框选" w="w-9" on caret>
        <rect x="3" y="3" width="12" height="12" rx="2" />
        <circle cx="3" cy="3" r="2" fill="#fff" stroke={BLUE} />
      </Snap>
      <Snap label="交点" w="ml-[3px] w-[25px]">
        <path d="M1 1l15 15M16 1L1 16" stroke="#777" />
      </Snap>
      <Snap label="极轴" w="ml-[3px] w-9" on caret>
        <path d="M15 15H2L13 2" stroke="#667" />
        <circle cx="8" cy="8" r="1.500" stroke={BLUE} />
      </Snap>
      <Snap label="动态输入" w="w-9" caret>
        <path d="M1 4h7M4.500 1v7" />
        <rect x="7" y="10" width="9" height="4" fill="#4d5566" />
      </Snap>
      <Snap label="截图" w="w-[24px]">
        <rect x="1.500" y="1.500" width="11" height="10" />
        <rect x="4" y="4" width="6" height="5" fill="#4d5566" />
        <path d="M4 14.500h6M15 4v5" />
        <path d="M11 9l5 5-3 .5-2 2z" fill="#333" stroke="none" />
      </Snap>
      <Snap label="弧线" w="w-[25px]">
        <path d="M2 16c0-6 4-11 11-13" />
        <circle cx="4" cy="9" r="1" />
        <circle cx="14" cy="3" r="1.200" />
        <path d="M10 9l6 5-4 .5-2 2z" fill="#333" stroke="none" />
      </Snap>
    </div>
    <svg width="16" height="16" viewBox="0 0 16 16" fill="none" stroke="#333" strokeWidth="1.200" className="ml-4">
      <path d="M1 15L15 1M10 1h5v5M6 15H1v-5" />
    </svg>
    <span className="ml-1">按鼠标左键指定第一个角点，或拾取构件图元</span>
    <div className="ml-auto mr-[11px] flex items-center">
      <svg width="14" height="14" viewBox="0 0 14 14">
        <circle cx="7" cy="7" r="7" fill="#f58a2c" />
        <path d="M7 3v5M7 9.500v1.500" stroke="#fff" strokeWidth="1.500" />
      </svg>
      <a href="#" className="ml-1.5">合法性检查存在问题，请点击查看</a>
      <svg width="14" height="14" viewBox="0 0 14 14" className="ml-[13px]">
        <circle cx="7" cy="7" r="7" fill="#6bbf1b" />
        <path d="M3.500 7l2.500 2.500 4.500-4.500" stroke="#fff" strokeWidth="1.300" fill="none" />
      </svg>
      <span className="ml-1.5">实时计算已完成</span>
    </div>
  </footer>
);

/* ---------- taskbar ---------- */

const GMark = () => <path d="M25 1c1 3 0 5-2 6 2 1 3 3 3 5l-5-1c-3-4-10-1-10 5s7 9 10 4h-5l1-5h11c1 9-4 16-12 16C4 31-1 17 7 9c5-4 12-2 18-8z" />;
const EMark = ({ bg = "none" }: { bg?: string }) => (
  <>
    <circle cx="16" cy="17" r="13" fill={bg} />
    <path d="M27 19H11c1 6 8 6 10 2h6c-4 12-21 9-21-4 0-14 21-15 21 2zm-6-4c-1-5-9-5-10 0z" fill="#5cc21a" stroke="#fff" strokeWidth="1.200" />
    <path d="M28 3C20 2 8 9 4 21c5-8 14-14 24-18z" fill="#8fdc3a" stroke="#fff" strokeWidth=".6" />
  </>
);
const CloudMark = () => (
  <path d="M14 23c-2 2-9 2-9-3 0-4 5-5 7-3M10 15c0-8 12-9 12-2 6 0 7 10 0 10-5 0-6-4-5-7M17 13c-3 3-2 7-5 9" fill="none" stroke="#fff" strokeWidth="2.800" strokeLinecap="round" />
);

const apps: [string, React.ReactNode][] = [
  ["广联达G+", <g fill="#1e9cf0" stroke="#0b63b8" strokeWidth=".7"><GMark /></g>],
  ["浏览器", <EMark bg="#fff" />],
  ["土建计量", <><rect width="32" height="32" rx="7" fill="#2a6cff" /><path d="M6 13L21 5l6 3-7 5v14l-5-3V12l-6 4z" fill="#fff" /></>],
  ["云应用", <><rect width="32" height="32" rx="7" fill="#fbae17" /><CloudMark /></>],
  ["预算", <><rect width="32" height="32" rx="7" fill="#4393f5" /><text x="16" y="24" fontSize="24" textAnchor="middle" fill="#fff">预</text></>],
  ["帮助文档", <><path d="M3 12h15v18H3z" fill="#fff" stroke="#333" /><path d="M6 16h8M6 20h8M6 24h6" stroke="#888" /><path d="M11 10c0-10 15-10 15-1 0 5-5 5-5 10h-5c0-6 5-7 5-10 0-2-4-2-4 1zM16 21h5v5h-5z" fill="#ffe900" stroke="#222" /></>],
];

const Tray = ({ children, label }: Kids & { label: string }) => (
  <button aria-label={label}>
    <svg width="17" height="17" viewBox="0 0 32 32" className="block">{children}</svg>
  </button>
);

const Dots = () => (
  <svg width="9" height="32" viewBox="0 0 9 32" fill="#0c3354" className="shrink-0">
    {[0, 1, 2, 3, 4, 5, 6, 7].map((i) => (
      <path key={i} d={`M0 ${i * 4}h2v2H0zM3.500 ${i * 4}h2v2h-2zM7 ${i * 4}h2v2H7z`} />
    ))}
  </svg>
);

const Taskbar = () => (
  <div className="relative flex h-10 shrink-0 items-center overflow-hidden border-t border-[#1d4766] bg-[linear-gradient(90deg,#1d5f8f_0%,#3287b8_4%,#55afdb_24%,#4aa6da_34%,#2c86c8_52%,#2374bd_70%,#1f66ae_77%,#174a85_79%,#123f74_84%,#174a85_100%)]">
    <svg className="absolute bottom-0 left-[1290px]" width="100" height="40" viewBox="0 0 100 40">
      <path d="M12 0c27 9 50 25 62 40h14C76 24 58 8 38 0z" fill="#a9d3f3" opacity=".8" />
    </svg>
    <button aria-label="开始" className="ml-2 shrink-0">
      <svg width="38" height="38" viewBox="0 0 38 38" className="block">
        <circle cx="19" cy="19" r="18" fill="#1c4f7e" stroke="#8fc0e0" />
        <ellipse cx="19" cy="28" rx="13" ry="8" fill="#31b4ee" opacity=".8" />
        <path d="M10 11c3-2 5-2 8 0l-1 8c-3-2-6-2-9 0z" fill="#f0592a" />
        <path d="M20 11c3 2 6 2 9 0l-2 8c-3 2-5 2-8 0z" fill="#8cc63e" />
        <path d="M8 20c3-2 5-2 8 0l-1 8c-3-2-5-2-8 0z" fill="#3fa0e8" />
        <path d="M18 20c3 2 6 2 9 0l-2 8c-3 2-5 2-8 0z" fill="#fcc92c" />
      </svg>
    </button>
    <div className="ml-3">
      <Dots />
    </div>
    <div className="relative ml-2 flex gap-[3px]">
      {apps.map(([n, art], i) => (
        <button key={n} aria-label={n} className={`flex h-[38px] w-[59px] items-center justify-center rounded-[3px] border border-[#1f5076] shadow-[inset_0_0_0_1px_rgba(255,255,255,0.45)] ${i === 2 ? "bg-white/60" : "bg-white/25"}`}>
          <svg width="32" height="32" viewBox="0 0 32 32">{art}</svg>
        </button>
      ))}
    </div>
    <div className="relative ml-auto flex items-center">
      <Dots />
      <div className="ml-2.5 flex items-center gap-[7px]">
        <Tray label="输入法键盘">
          <path d="M2 12h28v16H2zM16 12c0-6 8-2 12-9" fill="#d8d8d8" stroke="#777" strokeWidth="2" />
          <path d="M5 17h22M5 22h22" stroke="#555" strokeWidth="2" strokeDasharray="3 2" />
        </Tray>
        <Tray label="输入法帮助">
          <circle cx="16" cy="14" r="13" fill="#1a2fae" stroke="#fff" strokeWidth="2" />
          <text x="16" y="22" fontSize="22" fontWeight="bold" fill="#fff" textAnchor="middle">?</text>
        </Tray>
      </div>
      <div className="ml-2 flex w-3 flex-col items-center gap-2">
        <svg width="9" height="9" viewBox="0 0 9 9" fill="none" stroke="#fff"><path d="M3 3V.5h5.500v5H6M.5 3.500H6v5H.5z" /></svg>
        <Caret color="#fff" />
      </div>
      <div className="ml-2 flex items-center gap-[7px]">
        <Tray label="G+"><g fill="#25a9f5"><GMark /></g></Tray>
        <Tray label="安全浏览"><EMark bg="#fff" /></Tray>
        <Tray label="云应用托盘">
          <rect width="32" height="32" rx="3" fill="#fbae17" />
          <CloudMark />
        </Tray>
        <Tray label="加密锁">
          <rect width="32" height="32" rx="3" fill="#fff" />
          <path d="M6 16a10 10 0 0 1 18-5l-5 3a5 5 0 1 0 2 7" fill="none" stroke="#2374e8" strokeWidth="5" />
          <path d="M16 17h12v11H16z" fill="#f58a2c" />
        </Tray>
        <Tray label="安全删除硬件">
          <path d="M6 2h10v12H6zM4 12h14v12H4z" fill="#b8bcc0" stroke="#555" />
          <circle cx="21" cy="22" r="9" fill="#27a844" />
          <path d="M16 22l4 4 6-8" stroke="#fff" strokeWidth="3" fill="none" />
        </Tray>
        <Tray label="卫士">
          <circle cx="16" cy="16" r="14" fill="#ffd91a" stroke="#2f9e2f" strokeWidth="2" />
          <path d="M16 8v16M8 16h16" stroke="#2f9e2f" strokeWidth="5" />
        </Tray>
        <Tray label="音频">
          <path d="M2 12h6l10-9v26L8 20H2z" fill="#e85a3a" stroke="#fff" />
          <path d="M22 8v16M27 5v22" stroke="#b33" strokeWidth="2" />
        </Tray>
        <Tray label="网络"><path d="M2 24h4v4H2zM8 20h4v8H8zM14 15h4v13h-4zM20 10h4v18h-4zM26 4h4v24h-4z" fill="#fff" /></Tray>
        <Tray label="音量">
          <path d="M4 12h5l8-8v24l-8-8H4z" fill="#fff" />
          <path d="M20 10q5 6 0 12M24 6q8 10 0 20" stroke="#fff" strokeWidth="2" fill="none" />
        </Tray>
      </div>
      <div className="relative ml-3 w-[66px] text-center text-[12px] leading-[17px] text-white">
        <div>9:49 周三</div>
        <div>2024/6/26</div>
        <span className="absolute -right-1 -top-px size-[9px] rounded-full bg-red-600 text-center text-[8px] leading-[9px]">1</span>
      </div>
      <button aria-label="侧栏" className="ml-4 flex size-4 items-center justify-center bg-white">
        <svg width="6" height="8" viewBox="0 0 6 8"><path d="M0 0l5 4-5 4z" fill="#123" /></svg>
      </button>
      <button aria-label="显示桌面" className="ml-3 h-10 w-3.5 border-l border-[#0c2c50] bg-white/15" />
    </div>
  </div>
);

export default function App() {
  return (
    <div className="relative flex h-screen flex-col overflow-hidden bg-white font-['Noto_Sans','Noto_Sans_CJK_SC',sans-serif]">
      <TitleBar />
      <MenuBar />
      <Ribbon />
      <Combos />
      <main className="flex min-h-0 flex-1 text-[12px] leading-4">
        <NavPanel />
        <div className="ml-1 flex w-[291px] shrink-0 flex-col">
          <ListPanel />
          <PropPanel />
        </div>
        <ModelView />
        <DisplayPanel />
      </main>
      <StatusBar />
      <Taskbar />
      <Dialog />
    </div>
  );
}
